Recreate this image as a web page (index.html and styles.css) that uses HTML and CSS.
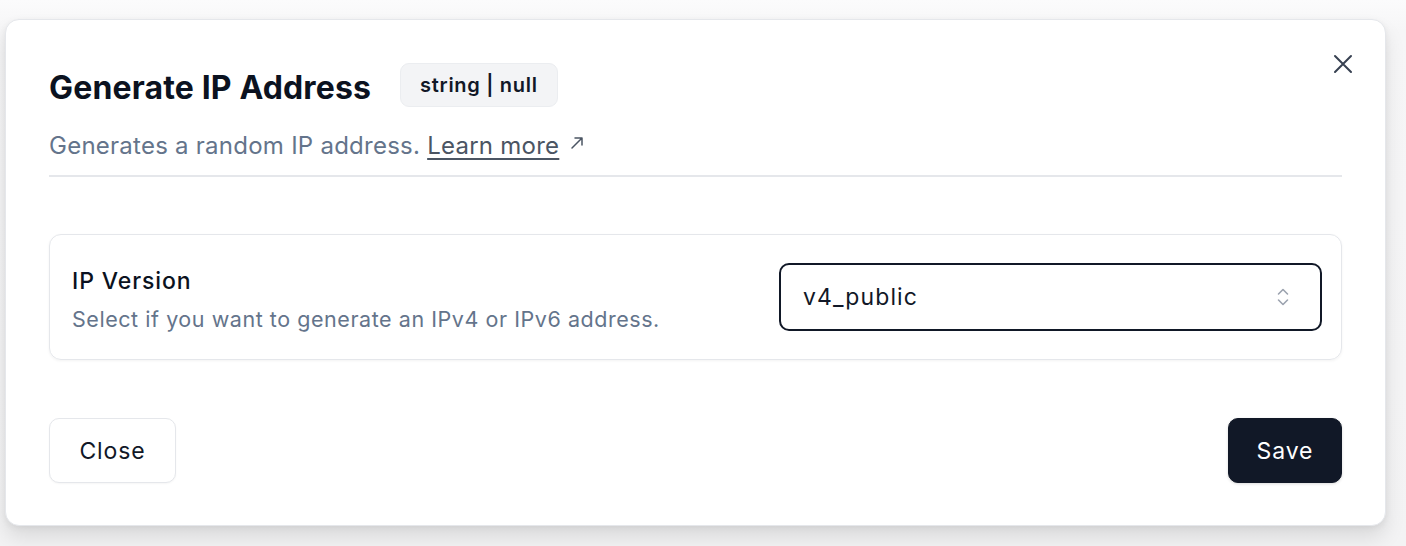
FILE: index.html
```html
<!DOCTYPE html>
<html lang="en">
<head>
<meta charset="utf-8">
<title>Generate IP Address</title>
<link rel="stylesheet" href="styles.css">
</head>
<body>
<div class="backdrop">
  <div class="modal">
    <button class="close-x" aria-label="Close">
      <svg width="20" height="20" viewBox="0 0 20 20"><path d="M2 2 L18 18 M18 2 L2 18" stroke="#374151" stroke-width="2" stroke-linecap="round" fill="none"/></svg>
    </button>
    <div class="header">
      <h2 class="title">Generate IP Address</h2>
      <span class="badge">string | null</span>
    </div>
    <p class="desc">Generates a random IP address. <a class="learn" href="#">Learn more</a><svg class="ext" width="14" height="14" viewBox="0 0 14 14"><path d="M2 12 L12 2 M5 2 H12 V9" stroke="#4b5563" stroke-width="1.5" fill="none" stroke-linecap="round" stroke-linejoin="round"/></svg></p>
    <div class="card">
      <div class="field-text">
        <div class="label">IP Version</div>
        <div class="sub">Select if you want to generate an IPv4 or IPv6 address.</div>
      </div>
      <div class="select">
        <span>v4_public</span>
        <svg width="14" height="20" viewBox="0 0 14 20"><path d="M2.5 7 L7 2.5 L11.5 7 M2.5 13 L7 17.5 L11.5 13" stroke="#9ca3af" stroke-width="1.6" fill="none" stroke-linecap="round" stroke-linejoin="round"/></svg>
      </div>
    </div>
    <div class="footer">
      <button class="btn btn-outline">Close</button>
      <button class="btn btn-dark">Save</button>
    </div>
  </div>
</div>
</body>
</html>
```
FILE: styles.css
```css
html, body {
  margin: 0;
  padding: 0;
}
body {
  background: linear-gradient(#fbfbfc 0px, #f6f6f7 30px, #f3f3f4 100%);
  font-family: Inter, "Noto Sans", "Liberation Sans", sans-serif;
  width: 1406px;
  height: 546px;
  overflow: hidden;
}
.backdrop {
  padding: 19px 20px 0 5px;
}
.modal {
  position: relative;
  box-sizing: border-box;
  width: 1381px;
  height: 507px;
  background: #fff;
  border: 1px solid #e5e7eb;
  border-radius: 14px;
  box-shadow: 0 12px 20px rgba(0, 0, 0, 0.1), 0 2px 6px rgba(0, 0, 0, 0.06);
  padding: 43px 43px 0 43px;
}
.close-x {
  position: absolute;
  top: 34px;
  right: 32px;
  border: 0;
  background: none;
  padding: 0;
  width: 20px;
  height: 20px;
  cursor: pointer;
}
.close-x svg { display: block; }
.header {
  display: flex;
  align-items: flex-start;
  gap: 29px;
  height: 50px;
}
.title {
  margin: 0;
  font-size: 32px;
  line-height: 50px;
  font-weight: 700;
  color: #0b1220;
  letter-spacing: 0.15px;
}
.badge {
  box-sizing: border-box;
  height: 44px;
  display: inline-flex;
  align-items: center;
  padding: 0 19px;
  background: #f3f4f6;
  border: 1px solid #ebedf0;
  border-radius: 9px;
  font-size: 20px;
  font-weight: 600;
  letter-spacing: 0.7px;
  color: #111827;
}
.desc {
  margin: 16px 0 0;
  padding-bottom: 12px;
  border-bottom: 2px solid #e5e7eb;
  font-size: 24px;
  line-height: 34px;
  letter-spacing: 0.25px;
  color: #64748b;
}
.learn {
  color: #4b5563;
  text-decoration: underline;
  text-decoration-thickness: 1.5px;
  text-underline-offset: 4px;
}
.ext {
  margin-left: 11px;
  vertical-align: 4px;
}
.card {
  margin-top: 57px;
  box-sizing: border-box;
  height: 126px;
  border: 1px solid #e5e7eb;
  border-radius: 12px;
  box-shadow: 0 1px 3px rgba(0, 0, 0, 0.05);
  padding: 0 19px 0 22px;
  display: flex;
  align-items: center;
  justify-content: space-between;
}
.field-text {
  display: flex;
  flex-direction: column;
  gap: 8px;
  margin-top: 5px;
}
.label {
  font-size: 23px;
  line-height: 30px;
  font-weight: 500;
  letter-spacing: 0.9px;
  color: #0b1220;
}
.sub {
  font-size: 21.5px;
  line-height: 30px;
  letter-spacing: 0.55px;
  color: #64748b;
}
.select {
  box-sizing: border-box;
  width: 543px;
  height: 68px;
  border: 2px solid #111827;
  border-radius: 10px;
  display: flex;
  align-items: center;
  justify-content: space-between;
  padding: 0 30px 0 22px;
  font-size: 23px;
  letter-spacing: 1.1px;
  color: #111827;
}
.select svg { display: block; }
.footer {
  margin-top: 58px;
  display: flex;
  justify-content: space-between;
}
.btn {
  box-sizing: border-box;
  height: 65px;
  border-radius: 10px;
  font-family: inherit;
  font-size: 23px;
  font-weight: 400;
  letter-spacing: 0.9px;
  cursor: pointer;
}
.btn-outline {
  width: 127px;
  background: #fff;
  border: 1px solid #e5e7eb;
  color: #111827;
  box-shadow: 0 1px 2px rgba(0, 0, 0, 0.04);
}
.btn-dark {
  width: 114px;
  background: #111827;
  border: 1px solid #111827;
  color: #fff;
  box-shadow: 0 1px 3px rgba(0, 0, 0, 0.15);
}
```
